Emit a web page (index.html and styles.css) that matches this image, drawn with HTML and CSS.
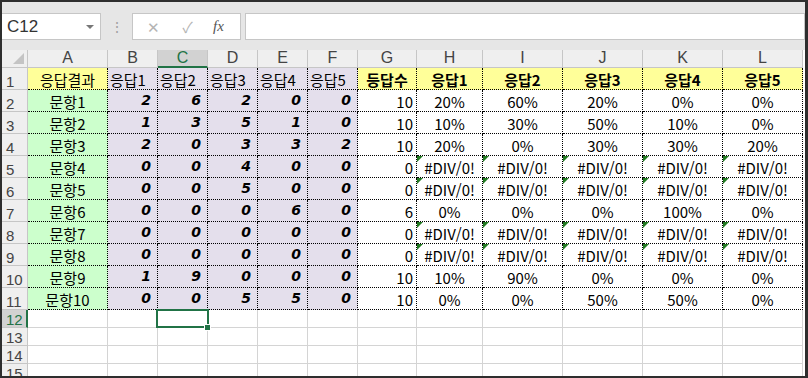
FILE: index.html
```html
<!DOCTYPE html>
<html lang="ko">
<head>
    <meta charset="UTF-8">
    <title>응답결과</title>
    <link rel="stylesheet" href="styles.css">
</head>
<body>
    <div class="window">
        <!-- 수식 입력줄 -->
        <div class="toolbar">
            <div class="namebox">
                <span>C12</span>
                <span class="arrow"></span>
            </div>
            <div class="grip">⋮</div>
            <div class="fxbox">
                <span class="tool">✕</span>
                <span class="tool">✓</span>
                <span class="fx">fx</span>
            </div>
            <div class="formula"></div>
        </div>

        <!-- 시트 -->
        <div class="sheet">
            <div class="corner"></div><div class="hd">A</div><div class="hd">B</div><div class="hd sel">C</div><div class="hd">D</div><div class="hd">E</div><div class="hd">F</div><div class="hd">G</div><div class="hd">H</div><div class="hd">I</div><div class="hd">J</div><div class="hd">K</div><div class="hd">L</div>

            <div class="rh">1</div><div class="c d y m">응답결과</div><div class="c d v l">응답1</div><div class="c d v l">응답2</div><div class="c d v l">응답3</div><div class="c d v l">응답4</div><div class="c d v l">응답5</div><div class="c d y m b">등답수</div><div class="c d y m b">응답1</div><div class="c d y m b">응답2</div><div class="c d y m b">응답3</div><div class="c d y m b">응답4</div><div class="c d y m b">응답5</div>

            <div class="rh">2</div><div class="c d g m">문항1</div><div class="c d v n">2</div><div class="c d v n">6</div><div class="c d v n">2</div><div class="c d v n">0</div><div class="c d v n">0</div><div class="c d r">10</div><div class="c d m">20%</div><div class="c d m">60%</div><div class="c d m">20%</div><div class="c d m">0%</div><div class="c d m">0%</div>

            <div class="rh">3</div><div class="c d g m">문항2</div><div class="c d v n">1</div><div class="c d v n">3</div><div class="c d v n">5</div><div class="c d v n">1</div><div class="c d v n">0</div><div class="c d r">10</div><div class="c d m">10%</div><div class="c d m">30%</div><div class="c d m">50%</div><div class="c d m">10%</div><div class="c d m">0%</div>

            <div class="rh">4</div><div class="c d g m">문항3</div><div class="c d v n">2</div><div class="c d v n">0</div><div class="c d v n">3</div><div class="c d v n">3</div><div class="c d v n">2</div><div class="c d r">10</div><div class="c d m">20%</div><div class="c d m">0%</div><div class="c d m">30%</div><div class="c d m">30%</div><div class="c d m">20%</div>

            <div class="rh">5</div><div class="c d g m">문항4</div><div class="c d v n">0</div><div class="c d v n">0</div><div class="c d v n">4</div><div class="c d v n">0</div><div class="c d v n">0</div><div class="c d r">0</div><div class="c d m err">#DIV/0!</div><div class="c d m err">#DIV/0!</div><div class="c d m err">#DIV/0!</div><div class="c d m err">#DIV/0!</div><div class="c d m err">#DIV/0!</div>

            <div class="rh">6</div><div class="c d g m">문항5</div><div class="c d v n">0</div><div class="c d v n">0</div><div class="c d v n">5</div><div class="c d v n">0</div><div class="c d v n">0</div><div class="c d r">0</div><div class="c d m err">#DIV/0!</div><div class="c d m err">#DIV/0!</div><div class="c d m err">#DIV/0!</div><div class="c d m err">#DIV/0!</div><div class="c d m err">#DIV/0!</div>

            <div class="rh">7</div><div class="c d g m">문항6</div><div class="c d v n">0</div><div class="c d v n">0</div><div class="c d v n">0</div><div class="c d v n">6</div><div class="c d v n">0</div><div class="c d r">6</div><div class="c d m">0%</div><div class="c d m">0%</div><div class="c d m">0%</div><div class="c d m">100%</div><div class="c d m">0%</div>

            <div class="rh">8</div><div class="c d g m">문항7</div><div class="c d v n">0</div><div class="c d v n">0</div><div class="c d v n">0</div><div class="c d v n">0</div><div class="c d v n">0</div><div class="c d r">0</div><div class="c d m err">#DIV/0!</div><div class="c d m err">#DIV/0!</div><div class="c d m err">#DIV/0!</div><div class="c d m err">#DIV/0!</div><div class="c d m err">#DIV/0!</div>

            <div class="rh">9</div><div class="c d g m">문항8</div><div class="c d v n">0</div><div class="c d v n">0</div><div class="c d v n">0</div><div class="c d v n">0</div><div class="c d v n">0</div><div class="c d r">0</div><div class="c d m err">#DIV/0!</div><div class="c d m err">#DIV/0!</div><div class="c d m err">#DIV/0!</div><div class="c d m err">#DIV/0!</div><div class="c d m err">#DIV/0!</div>

            <div class="rh">10</div><div class="c d g m">문항9</div><div class="c d v n">1</div><div class="c d v n">9</div><div class="c d v n">0</div><div class="c d v n">0</div><div class="c d v n">0</div><div class="c d r">10</div><div class="c d m">10%</div><div class="c d m">90%</div><div class="c d m">0%</div><div class="c d m">0%</div><div class="c d m">0%</div>

            <div class="rh">11</div><div class="c d g m">문항10</div><div class="c d v n">0</div><div class="c d v n">0</div><div class="c d v n">5</div><div class="c d v n">5</div><div class="c d v n">0</div><div class="c d r">10</div><div class="c d m">0%</div><div class="c d m">0%</div><div class="c d m">50%</div><div class="c d m">50%</div><div class="c d m">0%</div>

            <div class="rh sel">12</div><div class="c"></div><div class="c"></div><div class="c active"></div><div class="c"></div><div class="c"></div><div class="c"></div><div class="c"></div><div class="c"></div><div class="c"></div><div class="c"></div><div class="c"></div><div class="c"></div>

            <div class="rh">13</div><div class="c"></div><div class="c"></div><div class="c"></div><div class="c"></div><div class="c"></div><div class="c"></div><div class="c"></div><div class="c"></div><div class="c"></div><div class="c"></div><div class="c"></div><div class="c"></div>

            <div class="rh">14</div><div class="c"></div><div class="c"></div><div class="c"></div><div class="c"></div><div class="c"></div><div class="c"></div><div class="c"></div><div class="c"></div><div class="c"></div><div class="c"></div><div class="c"></div><div class="c"></div>

            <div class="rh">15</div><div class="c"></div><div class="c"></div><div class="c"></div><div class="c"></div><div class="c"></div><div class="c"></div><div class="c"></div><div class="c"></div><div class="c"></div><div class="c"></div><div class="c"></div><div class="c"></div>
        </div>
    </div>
</body>
</html>
```

FILE: styles.css
```css
* {
    margin: 0;
    padding: 0;
    box-sizing: border-box;
}

body {
    background: #ffffff;
    font-family: "Noto Sans CJK KR", "Noto Sans", sans-serif;
    color: #000;
}

.window {
    width: 808px;
    height: 378px;
    border: 2px solid #2e2e2e;
    border-right-width: 3px;
    background-color: #e6e6e6;
    overflow: hidden;
}

/* 수식 입력줄 */
.toolbar {
    height: 48px;
    display: flex;
    align-items: flex-start;
    padding-top: 11px;
}

.namebox {
    width: 99px;
    height: 27px;
    background: #fff;
    border: 1px solid #c6c6c6;
    border-left: none;
    display: flex;
    align-items: center;
    justify-content: space-between;
    padding: 0 6px 0 5px;
    font-family: "Liberation Sans", sans-serif;
    font-size: 17px;
    color: #333;
}

.arrow {
    width: 0;
    height: 0;
    border-left: 4px solid transparent;
    border-right: 4px solid transparent;
    border-top: 4px solid #777;
}

.grip {
    width: 31px;
    text-align: center;
    color: #a0a0a0;
    font-size: 14px;
    line-height: 27px;
}

.fxbox {
    width: 109px;
    height: 27px;
    background: #fff;
    border: 1px solid #c6c6c6;
    display: flex;
    align-items: center;
    padding-left: 12px;
    gap: 17px;
}

.tool {
    color: #b4b4b4;
    font-size: 15px;
    width: 17px;
    text-align: center;
}

.fx {
    font-family: "Liberation Serif", serif;
    font-style: italic;
    font-size: 15px;
    color: #555;
}

.formula {
    flex: 1;
    height: 27px;
    margin-left: 4px;
    background: #fff;
    border: 1px solid #c6c6c6;
}

/* 시트 */
.sheet {
    display: grid;
    grid-template-columns: 26px 80px repeat(5, 50px) 59px 66px repeat(4, 80px);
    grid-template-rows: 18px repeat(11, 22px) repeat(4, 18px);
    background: #fff;
    font-size: 15px;
    line-height: 1;
}

.corner {
    background: #efefef;
    border-right: 1px solid #c6c6c6;
    border-bottom: 1px solid #c6c6c6;
    position: relative;
}

.corner::after {
    content: "";
    position: absolute;
    right: 3px;
    bottom: 3px;
    border-left: 11px solid transparent;
    border-bottom: 11px solid #c4c4c4;
}

.hd {
    background: #efefef;
    border-right: 1px solid #c6c6c6;
    border-bottom: 1px solid #c6c6c6;
    color: #444;
    font-family: "Liberation Sans", sans-serif;
    font-size: 16px;
    display: flex;
    align-items: flex-end;
    justify-content: center;
    padding-bottom: 1px;
}

.hd.sel {
    background: #d2d2d2;
    color: #217346;
    border-bottom: 2px solid #217346;
    padding-bottom: 0;
}

.rh {
    background: #efefef;
    border-right: 1px solid #c6c6c6;
    border-bottom: 1px solid #c6c6c6;
    color: #444;
    font-family: "Liberation Sans", sans-serif;
    font-size: 15px;
    display: flex;
    align-items: flex-end;
    padding: 0 0 0 4px;
    overflow: hidden;
}

.rh.sel {
    background: #d2d2d2;
    color: #217346;
    border-right: 2px solid #217346;
}

.c {
    border-right: 1px solid #d4d4d4;
    border-bottom: 1px solid #d4d4d4;
    display: flex;
    align-items: flex-end;
    padding: 0 3px 2px;
    white-space: nowrap;
    position: relative;
}

.d {
    border-right: 1px dotted #000;
    border-bottom: 1px dotted #000;
}

.y { background: #ffff99; }
.v { background: #e4dfec; }
.g { background: #ccffcc; }

.m { justify-content: center; }
.r { justify-content: flex-end; }
.l { justify-content: flex-start; padding-left: 2px; }
.b { font-weight: bold; }

.n {
    justify-content: flex-end;
    font-family: "DejaVu Sans", sans-serif;
    font-weight: bold;
    font-style: italic;
    font-size: 14px;
    padding-right: 6px;
    padding-bottom: 4px;
}

.err::before {
    content: "";
    position: absolute;
    top: 0;
    left: 0;
    border-top: 6px solid #217a21;
    border-right: 6px solid transparent;
}

.active::after {
    content: "";
    position: absolute;
    top: -1px;
    left: -2px;
    right: -2px;
    bottom: -1px;
    border: 2px solid #217346;
}

.active::before {
    content: "";
    position: absolute;
    right: -4px;
    bottom: -4px;
    width: 5px;
    height: 5px;
    background: #217346;
    border: 1px solid #fff;
    z-index: 1;
}
```
